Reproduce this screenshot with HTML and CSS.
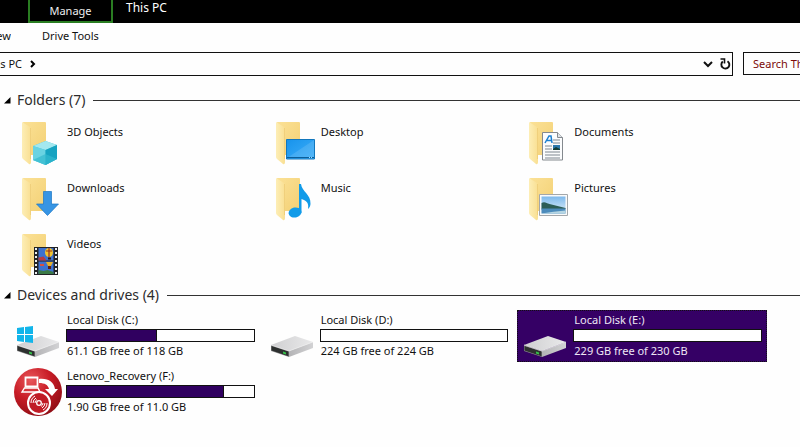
FILE: index.html
```html
<!DOCTYPE html>
<html lang="en">
<head>
<meta charset="utf-8">
<title>This PC</title>
<link rel="stylesheet" href="styles.css">
</head>
<body>
<svg class="defs" aria-hidden="true">
  <defs>
    <linearGradient id="gBack" x1="0" x2="1" y2="1"><stop offset="0" stop-color="#fbe196"/><stop offset="1" stop-color="#f3d074"/></linearGradient>
    <linearGradient id="gFlap" x1="0" x2="1"><stop offset="0" stop-color="#fdeeb6"/><stop offset="1" stop-color="#f9df92"/></linearGradient>
    <linearGradient id="gTop" x1="0" x2="1"><stop offset="0" stop-color="#cfcfd1"/><stop offset="1" stop-color="#e9e9ea"/></linearGradient>
    <linearGradient id="gSide" x1="0" x2="1"><stop offset="0" stop-color="#b4b4b6"/><stop offset="1" stop-color="#d2d2d4"/></linearGradient>
    <linearGradient id="gScreen" x1="0" x2="1" y2="1"><stop offset="0" stop-color="#1793ec"/><stop offset="1" stop-color="#3eaef8"/></linearGradient>
    <linearGradient id="gSky" x2="0" y2="1"><stop offset="0" stop-color="#7db9ec"/><stop offset="1" stop-color="#e2f1fb"/></linearGradient>
    <radialGradient id="gRed" cx=".35" cy=".25" r=".8"><stop offset="0" stop-color="#e8565a"/><stop offset=".5" stop-color="#c81c26"/><stop offset="1" stop-color="#8e0c14"/></radialGradient>
    <symbol id="folder" viewBox="0 0 48 48">
      <path d="M9 5h22q1 0 1 1v32H14z" fill="url(#gBack)"/>
      <path d="M8 5l8 5q1 1 1 2v32q0 4-2 3l-6-5q-1-1-1-2z" fill="url(#gFlap)"/>
      <path d="M16.500 11v31" stroke="#e9c56b" stroke-width=".6"/>
    </symbol>
    <symbol id="drive" viewBox="0 0 48 48">
      <path d="M3 33L27 24l18 6-24 9z" fill="url(#gTop)"/>
      <path d="M21 39l24-9v6L21 45z" fill="url(#gSide)"/>
      <path d="M3 33l18 6v6L3 39z" fill="#8b8b8d"/>
      <path d="M3.500 34l17 5.600v4.600L3.500 38.600z" fill="#2d302f"/>
      <path d="M15 39.500l3 1v2l-3-1z" fill="#35c24a"/>
      <path d="M3 33l18 6 24-9" fill="none" stroke="#f3f3f3" stroke-width=".6"/>
    </symbol>
  </defs>
</svg>

<header class="titlebar">
  <button class="manage" type="button">Manage</button>
  <h1 class="title">This PC</h1>
</header>

<nav class="ribbon">
  <a class="view" href="#">View</a>
  <a href="#">Drive Tools</a>
</nav>

<div class="location">
  <div class="address">
    <a class="crumb" href="#">This PC</a>
    <svg class="chevron" viewBox="0 0 8 8"><path d="M2 1l3 3-3 3" fill="none" stroke="#000" stroke-width="2"/></svg>
    <button class="tool" type="button" aria-label="Previous locations"><svg width="12" height="12" viewBox="0 0 12 12"><path d="M2 4l4 4 4-4" fill="none" stroke="#111" stroke-width="2"/></svg></button>
    <button class="tool" type="button" aria-label="Refresh"><svg width="12" height="12" viewBox="0 0 12 12"><path d="M3.800 3.500A4 4 0 1 0 8.500 3.200" fill="none" stroke="#111" stroke-width="1.900"/><path d="M1.500 1h4v4.500" fill="none" stroke="#111" stroke-width="1.600"/></svg></button>
  </div>
  <input class="search" type="text" aria-label="Search This PC" placeholder="Search This PC">
</div>

<main>
  <section>
    <h2 class="group"><svg class="marker" viewBox="0 0 7 7"><path d="M6.500 0v6.500H0z"/></svg>Folders (7)</h2>
    <div class="tiles">
      <a class="tile folder" href="#">
        <svg class="icon" viewBox="0 0 48 48"><use href="#folder"/><path d="M31.500 24L43 28v14l-11.500 6L19 43V29z" fill="#45c3d8"/><path d="M31.500 24L43 28l-11.500 5L19 29z" fill="#a4e8ef"/><path d="M19 29l12.500 4v15L19 43z" fill="#69d3e2"/><path d="M43 28l-11.500 5v15L43 42z" fill="#16a3c1"/><path d="M19 43l12.500-6L43 42l-11.500 6z" fill="#33b9cf" opacity=".7"/></svg>
        <span>3D Objects</span>
      </a>
      <a class="tile folder" href="#">
        <svg class="icon" viewBox="0 0 48 48"><use href="#folder"/><path d="M18.500 22.500h28v19.500h-28z" fill="url(#gScreen)" stroke="#1277bd"/><path d="M19 41L46 23v18z" fill="#fff" opacity=".12"/><path d="M19 40.500h27" stroke="#0b5f9b"/><path d="M41 40.500h4" stroke="#9bdcff" stroke-dasharray="1"/></svg>
        <span>Desktop</span>
      </a>
      <a class="tile folder" href="#">
        <svg class="icon" viewBox="0 0 48 48"><use href="#folder"/><path d="M21.500 15.500h15l5 5V43h-20z" fill="#fbfcfd" stroke="#84898e"/><path d="M36.500 15.500v5h5" fill="#dfe4e8" stroke="#84898e"/><path d="M24 26l4-7h2l1 7M26 23.500h5" fill="none" stroke="#1b7fd0" stroke-width="1.500"/><path d="M32 23h7M32 26h7M24 29h7M24 32h7M24 35h15M24 38h15M24 41h15" stroke="#7e8790"/><path d="M32 28h7v5h-7z" fill="#2c78ac"/><path d="M32 32l3-2 4 2v1h-7z" fill="#153e35"/></svg>
        <span>Documents</span>
      </a>
      <a class="tile folder" href="#">
        <svg class="icon" viewBox="0 0 48 48"><use href="#folder"/><path d="M29.500 18.500h8V31h7L33.500 42.500 22.500 31h7z" fill="#3795e4" stroke="#1b76c4" stroke-width=".7"/></svg>
        <span>Downloads</span>
      </a>
      <a class="tile folder" href="#">
        <svg class="icon" viewBox="0 0 48 48"><use href="#folder"/><ellipse cx="27" cy="39.500" rx="6.500" ry="5" fill="#119be9" transform="rotate(-12 27 39.500)"/><path d="M31 11h2c1 8 10 10 9.500 20-.3 3-1.500 4-2.500 5 1-6-1-8-6.500-10v14H31z" fill="#119be9"/></svg>
        <span>Music</span>
      </a>
      <a class="tile folder" href="#">
        <svg class="icon" viewBox="0 0 48 48"><use href="#folder"/><path d="M18.500 21.500h28v21h-28z" fill="#fafafa" stroke="#a3a7aa"/><path d="M20.500 23.500h24v17h-24z" fill="url(#gSky)"/><path d="M20.500 30c3-2 5 0 8 1l16 4v1l-24 .5z" fill="#2c5d55"/><path d="M20.500 35.500h24v5h-24z" fill="#4c8bbb"/><path d="M20.500 40.500q12-2 24-3v3z" fill="#b6d6e3"/></svg>
        <span>Pictures</span>
      </a>
      <a class="tile folder" href="#">
        <svg class="icon" viewBox="0 0 48 48"><use href="#folder"/><path d="M20 18h24v28H20z" fill="#222326"/><path d="M22 19v27M42 19v27" stroke="#eceff1" stroke-width="2" stroke-dasharray="2 2"/><path d="M24.500 19h15v12.500h-15zM24.500 32.500h15v12.500h-15z" fill="#3d71cf"/><ellipse cx="35" cy="23.500" rx="4" ry="4.500" fill="#f0c22f"/><path d="M35 19v9M32 22h6" stroke="#9a301f" stroke-width="1.200"/><path d="M34 28.500h3v2h-3z" fill="#2f1b16"/><path d="M24.500 31.500v-3l5-1 3 4z" fill="#b73b44"/><path d="M32 33h7l-2 4h-3z" fill="#e6b22b"/><path d="M34 37h3v3h-3z" fill="#5c1f19"/><path d="M24.500 45v-4l5 1 4-1 6 2v2z" fill="#3b7a46"/><path d="M26 36h4" stroke="#d8503f" stroke-width="2"/></svg>
        <span>Videos</span>
      </a>
    </div>
  </section>

  <section>
    <h2 class="group"><svg class="marker" viewBox="0 0 7 7"><path d="M6.500 0v6.500H0z"/></svg>Devices and drives (4)</h2>
    <div class="tiles">
      <a class="tile drive" href="#">
        <svg class="icon" viewBox="0 0 48 48"><use href="#drive"/><path d="M3 16l7-1v7H3zM11 15l8-1v8h-8zM3 23h7v7l-7-1zM11 23h8v8l-8-1z" fill="#12b5ea"/></svg>
        <span class="info"><span>Local Disk (C:)</span><span class="bar"><span class="used" style="width:48%"></span></span><span>61.1 GB free of 118 GB</span></span>
      </a>
      <a class="tile drive" href="#">
        <svg class="icon" viewBox="0 0 48 48"><use href="#drive"/></svg>
        <span class="info"><span>Local Disk (D:)</span><span class="bar"></span><span>224 GB free of 224 GB</span></span>
      </a>
      <a class="tile drive selected" href="#">
        <svg class="icon" viewBox="0 0 48 48"><use href="#drive"/></svg>
        <span class="info"><span>Local Disk (E:)</span><span class="bar"></span><span>229 GB free of 230 GB</span></span>
      </a>
      <a class="tile drive" href="#">
        <svg class="icon" viewBox="0 0 48 48"><circle cx="24" cy="24" r="24" fill="url(#gRed)"/><path d="M11.500 9.500h12v9h-12z" fill="none" stroke="#fff" stroke-width="1.800"/><path d="M10.500 20H24l2 4H8z" fill="none" stroke="#fff" stroke-width="1.400"/><path d="M25 11c9-1 15 3 16 10h3l-6 7-7-7h4c-1-4-4-6-10-6z" fill="#fff"/><circle cx="25" cy="35" r="11" fill="#c01c26" stroke="#fff" stroke-width="2"/><circle cx="25" cy="35" r="2.300" fill="none" stroke="#fff" stroke-width="1.300"/><path d="M17 35a8 8 0 0 1 4-7M19 35a6 6 0 0 1 3-5M21 35a4 4 0 0 1 2-3.500M33 35a8 8 0 0 1-4 7M31 35a6 6 0 0 1-3 5M29 35a4 4 0 0 1-2 3.500" fill="none" stroke="#fff"/></svg>
        <span class="info"><span>Lenovo_Recovery (F:)</span><span class="bar"><span class="used" style="width:84%"></span></span><span>1.90 GB free of 11.0 GB</span></span>
      </a>
    </div>
  </section>
</main>
</body>
</html>
```
FILE: styles.css
```css
* {
  box-sizing: border-box;
}

body {
  margin: 0;
  background: #fefefe;
  color: #111;
  font: 11px/16px "Noto Sans", "Open Sans", sans-serif;
  overflow: hidden;
}

a {
  color: inherit;
  text-decoration: none;
  white-space: nowrap;
}

button,
input {
  font: inherit;
  padding: 0;
  border: 0;
  background: none;
}

.defs {
  position: absolute;
  width: 0;
  height: 0;
}

.titlebar {
  display: flex;
  align-items: flex-start;
  gap: 13px;
  height: 23px;
  padding-left: 28px;
  background: #000;
  color: #fff;
}

.manage {
  width: 85px;
  height: 23px;
  border: 2px solid #2a7d22;
  border-top: 0;
  color: #eee;
}

.title {
  margin: 0;
  font-size: 12px;
  font-weight: 400;
  line-height: 16px;
}

.ribbon {
  display: flex;
  align-items: center;
  gap: 31px;
  height: 29px;
  padding-bottom: 4px;
}

.view,
.crumb {
  display: flex;
  justify-content: flex-end;
  overflow: hidden;
}

.view {
  width: 11px;
}

.crumb {
  width: 22px;
  margin-right: 7px;
}

.location {
  display: flex;
  align-items: flex-start;
  gap: 10px;
}

.address {
  display: flex;
  flex: 1;
  align-items: center;
  height: 24px;
  border: 1px solid #111;
  border-left: 0;
}

.chevron {
  width: 8px;
  height: 8px;
  margin-right: auto;
}

.tool {
  display: flex;
  margin-right: 5px;
}

.tool:last-child {
  margin-right: 1px;
}

.search {
  width: 57px;
  height: 23px;
  padding-left: 9px;
  border: 1px solid #111;
  border-right: 0;
  border-radius: 0;
}

.search::placeholder {
  color: #7c0a0a;
  opacity: 1;
}

main {
  padding-top: 14px;
}

.group {
  display: flex;
  align-items: center;
  height: 20px;
  margin: 0 0 5px;
  padding-left: 4px;
  color: #2c2c2c;
  font-size: 14px;
  font-weight: 400;
  line-height: 20px;
}

.group::after {
  content: "";
  flex: 1;
  height: 1px;
  margin-left: 8px;
  background: #333;
}

.marker {
  width: 7px;
  height: 7px;
  margin-right: 6px;
}

.tiles {
  display: grid;
  grid-template-columns: repeat(3, 1fr);
  grid-auto-rows: 52px;
  gap: 4px;
  margin-bottom: 6px;
  padding: 0 33px 0 10px;
}

.tile {
  display: flex;
  align-items: flex-start;
  gap: 4px;
  padding: 2px 5px 0 4px;
}

.folder span {
  margin: 7px 0 0 1px;
}

.icon {
  flex: none;
  width: 48px;
  height: 48px;
}

.info {
  display: flex;
  flex: 1;
  flex-direction: column;
}

.info > span:not(.bar) {
  padding-left: 1px;
}

.bar {
  height: 13px;
  margin: 1px 0;
  border: 1px solid #111;
  background: #fff;
}

.used {
  display: block;
  height: 100%;
  border-right: 1px solid #111;
  background: #300060;
}

.selected {
  background: #350065;
  outline: 1px dotted #111;
  outline-offset: -1px;
  color: #eee6f5;
}
```
